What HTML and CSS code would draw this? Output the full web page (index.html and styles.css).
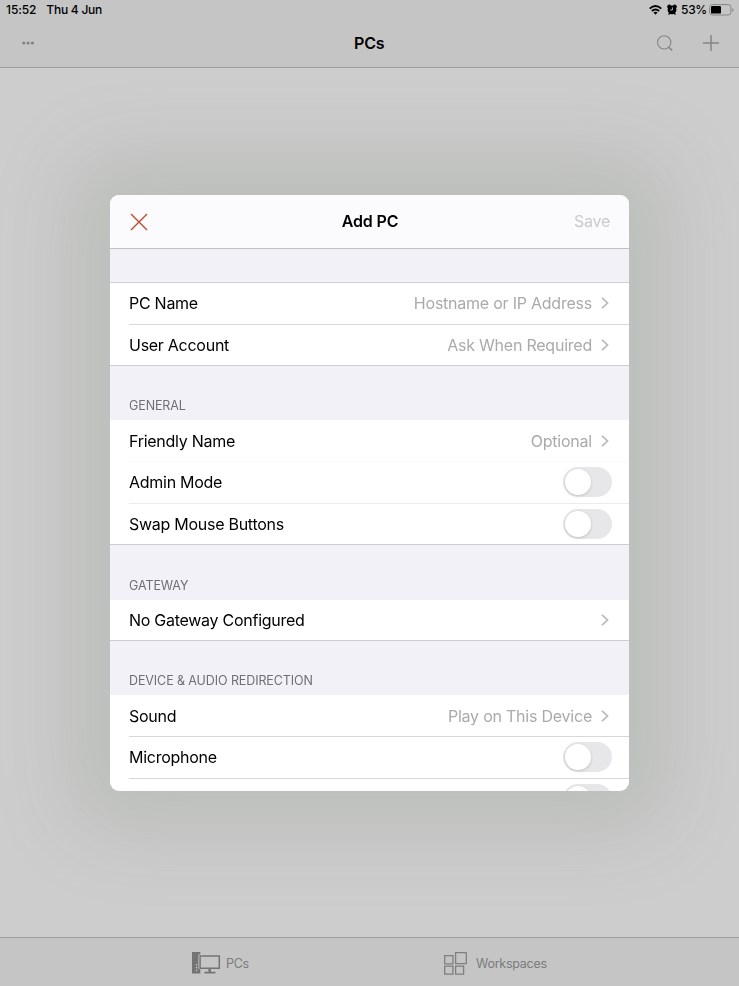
FILE: index.html
```html
<!DOCTYPE html>
<html lang="en">
<head>
<meta charset="utf-8">
<title>Add PC</title>
<link rel="stylesheet" href="styles.css">
</head>
<body>
<svg class="defs" width="0" height="0" aria-hidden="true">
  <symbol id="chevron" viewBox="0 0 8 12"><path d="M1 .8 6.5 6 1 11.2" fill="none" stroke="#b9b9bb" stroke-width="1.7"/></symbol>
</svg>
<div class="app">
  <header class="top">
    <div class="status">
      <span class="time">15:52</span><span class="date">Thu 4 Jun</span>
      <div class="indicators">
        <svg class="wifi" width="13" height="10" viewBox="0 0 13 10"><g fill="none" stroke="#000" stroke-width="1.9"><path d="M.7 3.6Q6.5-1.5 12.3 3.6"/><path d="M2.8 5.9q3.7-3 7.4 0"/></g><path d="M4.4 7.5q2.1-1.6 4.2 0L6.5 9.7z"/></svg>
        <svg class="alarm" width="10" height="11" viewBox="0 0 10 11"><circle cx="5" cy="5.8" r="4.4"/><path d="M.2 3.2Q0 .8 2.8.6L4 1.6 1 4.4zM9.8 3.2Q10 .8 7.2.6L6 1.6l3 2.8zM1 10.5l1.3-2 1.2.8-1.2 1.4zM9 10.5l-1.3-2-1.2.8 1.2 1.4z"/><path d="M5.4 3.4V6H3.2" fill="none" stroke="#c5c5c5" stroke-width=".9"/></svg>
        <span class="percent">53%</span>
        <svg class="battery" width="25" height="12" viewBox="0 0 25 12"><rect x=".6" y=".6" width="21.3" height="10.4" rx="2.8" fill="none" stroke="#858585"/><rect x="2" y="2" width="10" height="7.6" rx="1.2"/><path d="M23.4 4v3.8q1.2-.6 1.2-1.9T23.4 4z" fill="#858585"/></svg>
      </div>
    </div>
    <div class="nav">
      <svg class="more" width="13" height="4" viewBox="0 0 13 4" fill="#838383"><circle cx="1.8" cy="2" r="1.6"/><circle cx="6.1" cy="2" r="1.6"/><circle cx="10.4" cy="2" r="1.6"/></svg>
      <h1>PCs</h1>
      <svg class="search" width="17" height="17" viewBox="0 0 17 17" fill="none" stroke="#858585"><circle cx="7.2" cy="7.4" r="6.6" stroke-width="1.1"/><path d="m11.5 12 3.7 3.5" stroke-width="1.6"/></svg>
      <svg class="plus" width="16" height="16" viewBox="0 0 16 16"><path d="M8 0v16M0 8h16" stroke="#858585" stroke-width="1.5"/></svg>
    </div>
  </header>
  <main class="content"></main>
  <nav class="tabs">
    <div class="tab">
      <svg width="29" height="22" viewBox="0 0 29 22"><path d="M0 0h8.3v2.5H6.4V17h1.9v4.5H0z" fill="#747474"/><path d="M3.9 12.3h1.3v1.3H3.9zM3.9 15h1.3v1.3H3.9zM3.9 17.7h1.3V19H3.9z" fill="#d2d2d2"/><path d="M8.1 4h19.2v12.3H8.1z" fill="none" stroke="#747474" stroke-width="1.5"/><path d="M16.4 16.5h2.6v3.3h4.4v1.7h-11v-1.7h4z" fill="#747474"/></svg>
      <span>PCs</span>
    </div>
    <div class="tab">
      <svg width="23" height="23" viewBox="0 0 23 23" fill="none" stroke="#7f7f7f" stroke-width="1.3"><path d="M.7 3.7h8.2v8.2H.7zM11.6.7h10.7v10.9H11.6zM.7 14.1h8.2v8.1H.7zM11.6 14.1h8v8.1h-8z"/></svg>
      <span>Workspaces</span>
    </div>
  </nav>
</div>
<div class="overlay">
  <section class="modal">
    <div class="modal-head">
      <svg class="close" width="18" height="18" viewBox="0 0 18 18"><path d="m1 1 16 16M17 1 1 17" stroke="#bf4c30" stroke-width="1.4"/></svg>
      <h2>Add PC</h2>
      <span class="save">Save</span>
    </div>
    <div class="group-title blank"></div>
    <div class="group">
      <div class="row"><span class="label">PC Name</span><span class="value">Hostname or IP Address</span><svg class="chevron"><use href="#chevron"/></svg></div>
      <div class="row last"><span class="label">User Account</span><span class="value">Ask When Required</span><svg class="chevron"><use href="#chevron"/></svg></div>
    </div>
    <div class="group-title"><span>GENERAL</span></div>
    <div class="group">
      <div class="row faint"><span class="label">Friendly Name</span><span class="value">Optional</span><svg class="chevron"><use href="#chevron"/></svg></div>
      <div class="row light"><span class="label">Admin Mode</span><span class="switch"></span></div>
      <div class="row last"><span class="label">Swap Mouse Buttons</span><span class="switch"></span></div>
    </div>
    <div class="group-title"><span>GATEWAY</span></div>
    <div class="group">
      <div class="row last"><span class="label">No Gateway Configured</span><svg class="chevron"><use href="#chevron"/></svg></div>
    </div>
    <div class="group-title"><span>DEVICE &amp; AUDIO REDIRECTION</span></div>
    <div class="group">
      <div class="row"><span class="label">Sound</span><span class="value">Play on This Device</span><svg class="chevron"><use href="#chevron"/></svg></div>
      <div class="row"><span class="label">Microphone</span><span class="switch"></span></div>
      <div class="row"><span class="label"></span><span class="switch"></span></div>
    </div>
  </section>
</div>
</body>
</html>
```
FILE: styles.css
```css
* { box-sizing: border-box; }
body { margin: 0; font-family: Inter, "Liberation Sans", sans-serif; color: #000; }
svg { display: block; flex: none; }
.defs { position: absolute; }
h1, h2 { margin: 0; font-size: 16px; font-weight: 600; letter-spacing: -.15px; }

.app { height: 986px; display: flex; flex-direction: column; background: #cdcdcd; overflow: hidden; }
.top { height: 68px; background: #c5c5c5; border-bottom: 1px solid #9d9d9d; }
.content { flex: 1; }
.status { height: 19px; display: flex; align-items: center; padding: 0 5px 0 6px; font-size: 12px; font-weight: 500; letter-spacing: -.1px; }
.date { margin-left: 10px; letter-spacing: -.25px; }
.indicators { margin-left: auto; display: flex; align-items: center; }
.alarm { margin: 0 4px 0 5px; }
.percent { margin-right: 2px; letter-spacing: -.3px; }
.nav { height: 48px; display: grid; grid-template-columns: 332px 303px 46px 16px; align-items: center; padding-left: 22px; }

.tabs { height: 49px; display: flex; background: #c5c5c5; border-top: 1px solid #9d9d9d; color: #7b7b7b; font-size: 12.5px; letter-spacing: -.25px; padding: 2px 0 0 192px; }
.tab { width: 252px; display: flex; align-items: center; }
.tab span { margin-left: 5px; }
.tab + .tab span { margin-left: 9px; }

.overlay { position: fixed; inset: 0; display: grid; place-items: center; }
.modal { width: 519px; height: 596px; overflow: hidden; border-radius: 9px; background: #fff; box-shadow: 0 0 80px 38px rgba(113, 131, 112, .2); }
.modal-head { height: 54px; display: grid; grid-template-columns: 1fr auto 1fr; align-items: center; padding: 0 19px 0 20px; background: #fbfbfd; border-bottom: 1px solid #c0c0c6; }
.modal-head h2, .save { padding-bottom: 1px; }
.save { justify-self: end; color: #cacacc; font-size: 16px; letter-spacing: -.25px; }
.group-title { height: 54.1px; display: flex; align-items: flex-end; padding: 0 19px 6px; background: #f2f1f8; color: #6f6f74; font-size: 12.5px; line-height: 16px; letter-spacing: -.1px; }
.group-title.blank { height: 33.9px; border-bottom: 1px solid #d0d0d5; }
.row { height: 41.7px; display: flex; align-items: center; margin-left: 19px; padding-right: 20px; border-bottom: 1px solid #d7d7da; font-size: 16px; letter-spacing: -.27px; }
.row.last { margin-left: 0; padding-left: 19px; border-color: #cdcdd1; }
.row.faint { border-color: #fafafa; }
.row.light { border-color: #ececef; }
.label { flex: 1; }
.value { color: #aaaaac; letter-spacing: -.23px; }
.chevron { width: 8px; height: 12px; margin-left: 9px; }
.switch { width: 49px; height: 30px; margin-right: -3px; padding: 2px; border-radius: 15px; background: #e7e7e9; }
.switch::before { content: ""; display: block; width: 26px; height: 26px; border-radius: 50%; background: #fff; box-shadow: 0 1px 3px rgba(0, 0, 0, .17); }
```
